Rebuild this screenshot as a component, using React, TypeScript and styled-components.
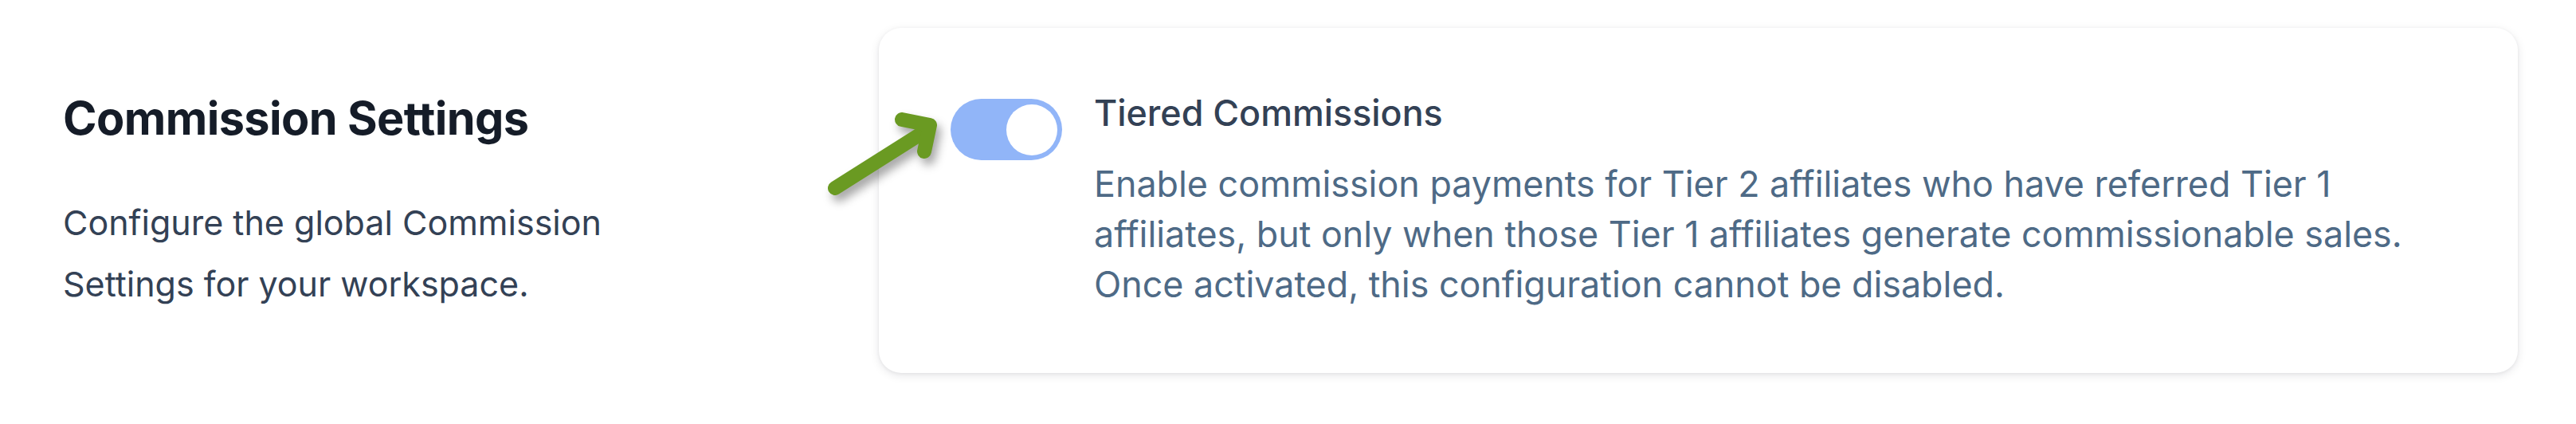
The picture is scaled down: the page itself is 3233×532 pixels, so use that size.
import React, { useState } from 'react';
import styled, { createGlobalStyle } from 'styled-components';

const GlobalStyle = createGlobalStyle`
  html, body {
    margin: 0;
    padding: 0;
    background: #ffffff;
  }
  body {
    font-family: Inter, "Open Sans", Arial, sans-serif;
    -webkit-font-smoothing: antialiased;
  }
`;

const Page = styled.div`
  position: relative;
  display: flex;
  align-items: flex-start;
  width: 3233px;
  height: 532px;
  box-sizing: border-box;
  padding: 35px 73px 0 79px;
`;

const Intro = styled.div`
  width: 1024px;
  flex-shrink: 0;
  padding-top: 68px;
`;

const Heading = styled.h2`
  margin: 0;
  font-size: 57.6px;
  line-height: 90px;
  font-weight: 700;
  letter-spacing: -0.6px;
  color: #151c28;
`;

const IntroText = styled.p`
  margin: 48px 0 0;
  width: 740px;
  font-size: 43px;
  line-height: 77px;
  color: #334155;
`;

const Card = styled.div`
  flex: 1;
  display: flex;
  align-items: flex-start;
  gap: 40px;
  height: 433px;
  box-sizing: border-box;
  padding: 89px 90px;
  background: #ffffff;
  border-radius: 28px;
  box-shadow: 0 3px 12px rgba(15, 23, 42, 0.1), 0 1px 4px rgba(15, 23, 42, 0.06);
`;

const Toggle = styled.button<{ $on: boolean }>`
  flex-shrink: 0;
  display: flex;
  align-items: center;
  justify-content: ${(p) => (p.$on ? 'flex-end' : 'flex-start')};
  width: 140px;
  height: 77px;
  padding: 0 6px;
  border: none;
  border-radius: 40px;
  background: ${(p) => (p.$on ? '#91b5f8' : '#e2e8f0')};
  cursor: not-allowed;
`;

const Knob = styled.span`
  width: 64px;
  height: 64px;
  border-radius: 50%;
  background: #ffffff;
`;

const Body = styled.div`
  display: flex;
  flex-direction: column;
  margin-top: -14px;
`;

const Title = styled.div`
  font-size: 44.8px;
  line-height: 64px;
  font-weight: 500;
  color: #334155;
`;

const Description = styled.p`
  margin: 26px 0 0;
  max-width: 1740px;
  font-size: 44.8px;
  line-height: 63px;
  color: #4e6a86;
`;

// annotation arrow pointing at the toggle
const Arrow = styled.svg`
  position: absolute;
  left: 1020px;
  top: 120px;
  width: 180px;
  height: 150px;
  overflow: visible;
  filter: drop-shadow(5px 8px 6px rgba(0, 0, 0, 0.35));
`;

export default function App() {
  const [tiered] = useState(true);

  return (
    <>
      <GlobalStyle />
      <Page>
        <Intro>
          <Heading>Commission Settings</Heading>
          <IntroText>Configure the global Commission Settings for your workspace.</IntroText>
        </Intro>
        <Card>
          <Toggle $on={tiered} disabled aria-pressed={tiered}>
            <Knob />
          </Toggle>
          <Body>
            <Title>Tiered Commissions</Title>
            <Description>
              Enable commission payments for Tier 2 affiliates who have referred Tier 1 affiliates, but only
              when those Tier 1 affiliates generate commissionable sales. Once activated, this configuration
              cannot be disabled.
            </Description>
          </Body>
        </Card>
        <Arrow viewBox="1020 120 180 150">
          <g fill="none" stroke="#6a9a22" strokeWidth="18" strokeLinecap="round" strokeLinejoin="round">
            <path d="M1048 236 L1162 164" />
            <path d="M1132 150 L1167 157 L1160 190" />
          </g>
        </Arrow>
      </Page>
    </>
  );
}
